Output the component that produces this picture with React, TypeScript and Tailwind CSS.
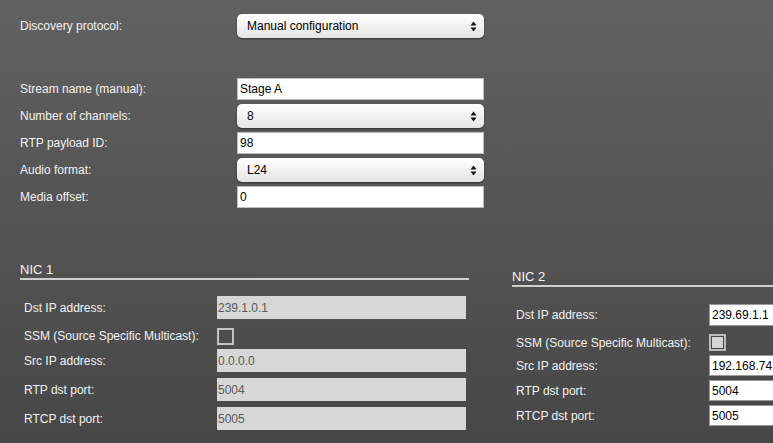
const font = "font-['Liberation_Sans',Arial,sans-serif]";

function Arrows() {
  return (
    <svg width="7" height="11" viewBox="0 0 7 11" className="shrink-0">
      <path d="M3.5 0.5 L6.5 4.5 H0.5 Z" fill="#111" />
      <path d="M3.5 10.5 L6.5 6.5 H0.5 Z" fill="#111" />
    </svg>
  );
}

function Select({ value }: { value: string }) {
  return (
    <div className="w-[247px] h-6 shrink-0 rounded-[5px] bg-gradient-to-b from-white to-[#e4e4e4] shadow-[0_1px_2px_rgba(0,0,0,0.45)] flex items-center justify-between pl-[10px] pr-[7px] text-[12px] text-black">
      <span>{value}</span>
      <Arrows />
    </div>
  );
}

function TextBox({ value }: { value: string }) {
  return (
    <div className="w-[247px] h-[22px] shrink-0 bg-white border border-[#bdbdbd] flex items-center pl-[2px] text-[12px] text-black">
      {value}
    </div>
  );
}

function TopRow({ label, children, className = '' }: { label: string; children: React.ReactNode; className?: string }) {
  return (
    <div className={`flex items-center ${className}`}>
      <div className="w-[217px] shrink-0 text-[12px] text-[#f2f2f2]">{label}</div>
      {children}
    </div>
  );
}

type Nic = {
  title: string;
  disabled: boolean;
  checked: boolean;
  dst: string;
  src: string;
  rtp: string;
  rtcp: string;
};

function NicField({ value, disabled, h }: { value: string; disabled: boolean; h: string }) {
  return disabled ? (
    <div className={`w-[249px] ${h} shrink-0 bg-[#d7d7d7] flex items-center pl-[1px] text-[12px] text-[#5a5a5a]`}>{value}</div>
  ) : (
    <div className={`w-[249px] ${h} shrink-0 bg-white border border-[#9a9a9a] flex items-center pl-[2px] text-[12px] text-black whitespace-nowrap overflow-hidden`}>
      {value}
    </div>
  );
}

function NicPanel({ nic, wide }: { nic: Nic; wide: boolean }) {
  const h = wide ? 'h-[23px]' : 'h-[21px]';
  const rows: [string, string][] = [
    ['Src IP address:', nic.src],
    ['RTP dst port:', nic.rtp],
    ['RTCP dst port:', nic.rtcp],
  ];
  return (
    <div className={`shrink-0 ${wide ? 'w-[449px]' : 'w-[300px] mt-[7px]'}`}>
      <div className="text-[13px] leading-[15px] text-[#f4f4f4] pb-[1px] border-b-2 border-[#cfcfcf]">{nic.title}</div>
      <div className="pl-1">
        <div className={`flex items-center ${wide ? 'mt-[16px] h-[23px]' : 'mt-[17px] h-[22px]'}`}>
          <div className="w-[193px] shrink-0 text-[12px] text-[#f2f2f2]">Dst IP address:</div>
          <NicField value={nic.dst} disabled={nic.disabled} h={wide ? 'h-[23px]' : 'h-[22px]'} />
        </div>
        <div className={`flex items-center ${wide ? 'mt-[8px] h-[18px]' : 'mt-[8px] h-[17px]'}`}>
          <div className="w-[193px] shrink-0 text-[12px] text-[#f2f2f2] whitespace-nowrap">SSM (Source Specific Multicast):</div>
          {nic.checked ? (
            <div className="w-[17px] h-[17px] shrink-0 border-2 border-[#bcbcbc] bg-[#444] p-[1px]">
              <div className="w-full h-full bg-[#d4d4d4]" />
            </div>
          ) : (
            <div className="w-[17px] h-[17px] shrink-0 border-2 border-[#c4c4c4]" />
          )}
        </div>
        {rows.map(([label, value], i) => (
          <div key={label} className={`flex items-center ${h} ${wide ? (i === 0 ? 'mt-[4px]' : 'mt-[6px]') : 'mt-[4px]'}`}>
            <div className="w-[193px] shrink-0 text-[12px] text-[#f2f2f2]">{label}</div>
            <NicField value={value} disabled={nic.disabled} h={h} />
          </div>
        ))}
      </div>
    </div>
  );
}

export default function App() {
  const nic1: Nic = { title: 'NIC 1', disabled: true, checked: false, dst: '239.1.0.1', src: '0.0.0.0', rtp: '5004', rtcp: '5005' };
  const nic2: Nic = { title: 'NIC 2', disabled: false, checked: true, dst: '239.69.1.1', src: '192.168.74.10', rtp: '5004', rtcp: '5005' };

  return (
    <div className={`w-[773px] h-[443px] overflow-hidden bg-gradient-to-b from-[#616161] to-[#474747] ${font}`}>
      <div className="pl-5 pt-[14px]">
        <TopRow label="Discovery protocol:" className="h-6">
          <Select value="Manual configuration" />
        </TopRow>
        <TopRow label="Stream name (manual):" className="h-[22px] mt-[40px]">
          <TextBox value="Stage A" />
        </TopRow>
        <TopRow label="Number of channels:" className="h-6 mt-1">
          <Select value="8" />
        </TopRow>
        <TopRow label="RTP payload ID:" className="h-[22px] mt-1">
          <TextBox value="98" />
        </TopRow>
        <TopRow label="Audio format:" className="h-6 mt-1">
          <Select value="L24" />
        </TopRow>
        <TopRow label="Media offset:" className="h-[22px] mt-1">
          <TextBox value="0" />
        </TopRow>

        <div className="flex items-start gap-[43px] mt-[54px]">
          <NicPanel nic={nic1} wide />
          <NicPanel nic={nic2} wide={false} />
        </div>
      </div>
    </div>
  );
}
